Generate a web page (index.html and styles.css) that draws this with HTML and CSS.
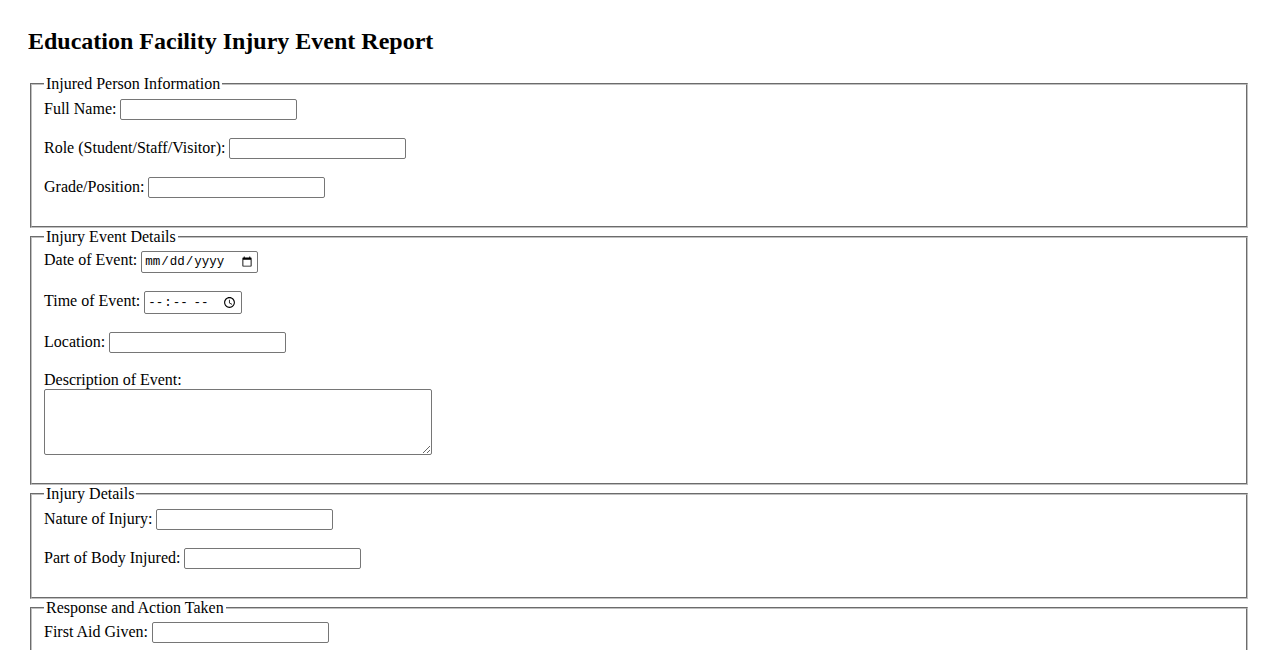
FILE: index.html
```html
<!DOCTYPE html>
<html lang="en">
<head>
<meta charset="utf-8">
<title>Education Facility Injury Event Report</title>
<link rel="stylesheet" href="styles.css">
</head>
<body>
<h2 class="title">Education Facility Injury Event Report</h2>
<form class="report">
  <fieldset class="section">
    <legend class="section-legend">Injured Person Information</legend>
    <div class="row"><label for="fullName">Full Name:</label> <input class="text" type="text" id="fullName"></div>
    <div class="row"><label for="role">Role (Student/Staff/Visitor):</label> <input class="text" type="text" id="role"></div>
    <div class="row"><label for="grade">Grade/Position:</label> <input class="text" type="text" id="grade"></div>
  </fieldset>
  <fieldset class="section">
    <legend class="section-legend">Injury Event Details</legend>
    <div class="row"><label for="date">Date of Event:</label> <input class="date" type="date" id="date"></div>
    <div class="row"><label for="time">Time of Event:</label> <input class="time" type="time" id="time"></div>
    <div class="row"><label for="location">Location:</label> <input class="text" type="text" id="location"></div>
    <div class="row"><label for="desc">Description of Event:</label><textarea class="area" id="desc"></textarea></div>
  </fieldset>
  <fieldset class="section">
    <legend class="section-legend">Injury Details</legend>
    <div class="row"><label for="nature">Nature of Injury:</label> <input class="text" type="text" id="nature"></div>
    <div class="row"><label for="part">Part of Body Injured:</label> <input class="text" type="text" id="part"></div>
  </fieldset>
  <fieldset class="section">
    <legend class="section-legend">Response and Action Taken</legend>
    <div class="row"><label for="firstAid">First Aid Given:</label> <input class="text" type="text" id="firstAid"></div>
    <div class="row"><label for="medical">Medical Attention Required:</label> <input class="text" type="text" id="medical"></div>
    <div class="row"><label for="action">Action Taken:</label><textarea class="area" id="action"></textarea></div>
  </fieldset>
</form>
</body>
</html>
```

FILE: styles.css
```css
body {
  margin: 28px;
  font-family: "Liberation Serif", "Times New Roman", serif;
  font-size: 16px;
  color: #000;
  background: #fff;
}
.title {
  font-size: 24px;
  font-weight: bold;
  margin: 0 0 20px;
}
.section {
  margin: 0 2px;
  padding: 5.6px 12px 10px;
  border: 2px groove #c0c0c0;
}
.section-legend {
  padding: 0 2px;
}
.row {
  margin-bottom: 18px;
}
.text {
  box-sizing: border-box;
  width: 177px;
  height: 21px;
  border: 1px solid #767676;
  border-radius: 2px;
  padding: 1px 2px;
  font-family: "Liberation Sans", Arial, sans-serif;
  font-size: 13.33px;
}
.date, .time {
  box-sizing: border-box;
  border: 1px solid #767676;
  border-radius: 2px;
  font-family: "Liberation Mono", "DejaVu Sans Mono", monospace;
  font-size: 12.5px;
  padding: 1px 2px;
}
.date {
  width: 117px;
  height: 22px;
}
.time {
  width: 98px;
  height: 23px;
}
.area {
  display: block;
  box-sizing: border-box;
  width: 388px;
  height: 66px;
  border: 1px solid #767676;
  border-radius: 2px;
  font-size: 13.33px;
}
```
